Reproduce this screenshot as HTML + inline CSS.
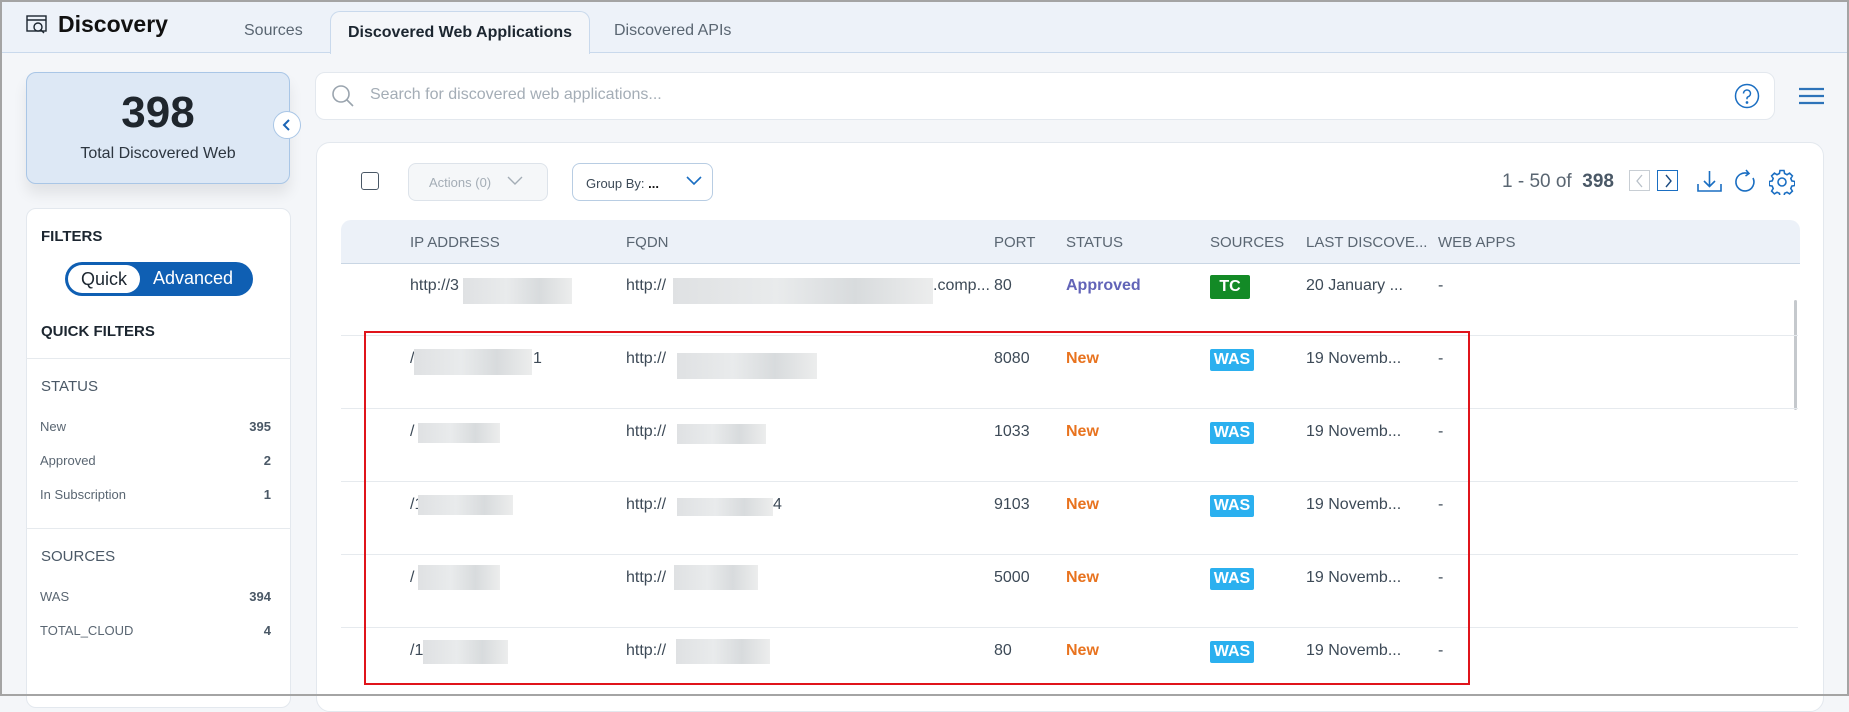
<!DOCTYPE html>
<html><head><meta charset="utf-8"><style>
*{box-sizing:border-box;margin:0;padding:0}
body{width:1849px;height:696px;overflow:hidden;background:#f4f6f9;font-family:"Liberation Sans",sans-serif;color:#3d4a57;position:relative}
.a{position:absolute}
.frame{position:absolute;left:0;top:0;width:1849px;height:696px;border:2px solid #a4a4a4;pointer-events:none;z-index:9}
.top{left:0;top:0;width:1849px;height:53px;background:#edf2f9;border-bottom:1px solid #c9d9ec}
.tab{font-size:16px;color:#5a6672;top:22px}
.activetab{left:330px;top:11px;width:260px;height:43px;background:#f4f6f9;border:1px solid #c9d9ec;border-bottom:none;border-radius:10px 10px 0 0;font-weight:bold;font-size:16px;color:#1c2630;text-align:center;line-height:42px}
.card{left:26px;top:72px;width:264px;height:112px;background:#dde8f5;border:1px solid #a9c6e6;border-radius:10px;box-shadow:0 10px 14px rgba(0,0,0,.08);text-align:center}
.panel{background:#fff;border:1px solid #e3e8ee;border-radius:10px}
.fl{font-size:13px;color:#5a6672;left:40px}
.fn{font-size:13px;color:#4a5866;font-weight:bold;right:1578px;text-align:right}
.hd{font-size:15px;color:#5a6672;top:234px}
.cell{font-size:16px;color:#3d4a57}
.blur{background:linear-gradient(90deg,#dfe1e3,#e9ebec 40%,#d8dbdd 70%,#eceded);height:26px}
.sep{left:341px;width:1457px;height:1px;background:#e6eaee}
.new{color:#e8731f;font-weight:bold;font-size:16px;left:1066px}
.was{left:1210px;width:44px;height:22px;background:#2bb0ef;color:#fff;font-weight:bold;font-size:16px;text-align:center;line-height:22px;border-radius:2px}
</style></head><body>
<div class="a top"></div>
<svg class="a" style="left:26px;top:15px" width="22" height="20" viewBox="0 0 22 20" fill="none" stroke="#1c2630" stroke-width="1.4"><rect x="1" y="1" width="19" height="15"/><line x1="1" y1="5" x2="20" y2="5"/><circle cx="12" cy="12" r="4" fill="#edf2f9"/><line x1="15" y1="15" x2="18" y2="18"/></svg>
<div class="a" style="left:58px;top:11px;font-size:23px;font-weight:bold;color:#111">Discovery</div>
<div class="a tab" style="left:244px">Sources</div>
<div class="a activetab">Discovered Web Applications</div>
<div class="a tab" style="left:614px">Discovered APIs</div>

<div class="a card"><div style="font-size:44px;font-weight:bold;color:#1f262d;margin-top:16px;line-height:48px">398</div><div style="font-size:16px;color:#2d3640;margin-top:8px">Total Discovered Web</div></div>
<div class="a" style="left:273px;top:111px;width:28px;height:28px;border-radius:50%;background:#fff;border:1px solid #a9c6e6"></div>
<svg class="a" style="left:281px;top:118px" width="12" height="14"><path d="M8 2 L3 7 L8 12" fill="none" stroke="#1a64b5" stroke-width="2"/></svg>

<div class="a panel" style="left:26px;top:208px;width:265px;height:500px"></div>
<div class="a" style="left:41px;top:228px;font-size:15px;font-weight:bold;color:#1c2630">FILTERS</div>
<div class="a" style="left:65px;top:262px;width:188px;height:34px;border-radius:17px;background:#0f5fb3"></div>
<div class="a" style="left:68px;top:265px;width:72px;height:28px;border-radius:14px;background:#fff;text-align:center;font-size:18px;line-height:28px;color:#1c2630">Quick</div>
<div class="a" style="left:153px;top:268px;font-size:18px;color:#fff">Advanced</div>
<div class="a" style="left:41px;top:323px;font-size:15px;font-weight:bold;color:#1c2630">QUICK FILTERS</div>
<div class="a" style="left:26px;top:358px;width:265px;height:1px;background:#e6eaee"></div>
<div class="a" style="left:41px;top:378px;font-size:15px;color:#4a5866">STATUS</div>
<div class="a fl" style="top:419px">New</div><div class="a fn" style="top:419px">395</div>
<div class="a fl" style="top:453px">Approved</div><div class="a fn" style="top:453px">2</div>
<div class="a fl" style="top:487px">In Subscription</div><div class="a fn" style="top:487px">1</div>
<div class="a" style="left:26px;top:528px;width:265px;height:1px;background:#e6eaee"></div>
<div class="a" style="left:41px;top:548px;font-size:15px;color:#4a5866">SOURCES</div>
<div class="a fl" style="top:589px">WAS</div><div class="a fn" style="top:589px">394</div>
<div class="a fl" style="top:623px">TOTAL_CLOUD</div><div class="a fn" style="top:623px">4</div>

<div class="a panel" style="left:315px;top:72px;width:1460px;height:48px"></div>
<svg class="a" style="left:330px;top:83px" width="26" height="26" fill="none" stroke="#9aa4ae" stroke-width="1.6"><circle cx="11" cy="11" r="8"/><line x1="17" y1="17" x2="23" y2="23"/></svg>
<div class="a" style="left:370px;top:86px;font-size:16px;color:#a4adb6">Search for discovered web applications...</div>
<svg class="a" style="left:1734px;top:83px" width="26" height="26" fill="none" stroke="#1a6ec2" stroke-width="1.5"><circle cx="13" cy="13" r="11.5"/><path d="M9.5 10.5a3.5 3.5 0 1 1 4.5 3.3c-.7.3-1 .8-1 1.5v1"/><circle cx="13" cy="19.5" r=".6" fill="#1a6ec2"/></svg>
<svg class="a" style="left:1799px;top:86px" width="25" height="20" stroke="#2d73b9" stroke-width="2.2"><line x1="0" y1="3" x2="25" y2="3"/><line x1="0" y1="10" x2="25" y2="10"/><line x1="0" y1="17" x2="25" y2="17"/></svg>

<div class="a panel" style="left:316px;top:142px;width:1508px;height:570px;border-radius:14px"></div>
<div class="a" style="left:361px;top:172px;width:18px;height:18px;border:1.5px solid #4a5866;border-radius:3px"></div>
<div class="a" style="left:408px;top:163px;width:140px;height:38px;border:1px solid #dde3ea;border-radius:8px;background:#f5f7f9;font-size:13px;color:#a4adb6;padding:11px 0 0 20px">Actions (0)</div>
<svg class="a" style="left:507px;top:176px" width="16" height="10"><path d="M1 1 L8 8 L15 1" fill="none" stroke="#a4adb6" stroke-width="1.4"/></svg>
<div class="a" style="left:572px;top:163px;width:141px;height:38px;border:1px solid #b8cde3;border-radius:8px;background:#fff;font-size:13px;color:#3d4a57;padding:12px 0 0 13px">Group By: <b style="color:#111">...</b></div>
<svg class="a" style="left:686px;top:176px" width="16" height="10"><path d="M1 1 L8 8 L15 1" fill="none" stroke="#1a6ec2" stroke-width="1.6"/></svg>
<div class="a" style="left:1502px;top:171px;font-size:19px;color:#5a6672">1 - 50 of <b style="color:#4a5866">&nbsp;398</b></div>
<div class="a" style="left:1629px;top:170px;width:21px;height:21px;border:1px solid #c8ced4"></div>
<svg class="a" style="left:1634px;top:174px" width="12" height="14"><path d="M8 1 L3 7 L8 13" fill="none" stroke="#b8c0c8" stroke-width="1.3"/></svg>
<div class="a" style="left:1657px;top:170px;width:21px;height:21px;border:1.5px solid #1a6ec2"></div>
<svg class="a" style="left:1662px;top:174px" width="12" height="14"><path d="M4 1 L9 7 L4 13" fill="none" stroke="#1a4a80" stroke-width="1.4"/></svg>
<svg class="a" style="left:1697px;top:170px" width="26" height="24" fill="none" stroke="#1a6ec2" stroke-width="1.6"><path d="M1 14v7h23v-7"/><path d="M12.5 1v15M7 11l5.5 5.5L18 11"/></svg>
<svg class="a" style="left:1733px;top:169px" width="24" height="26" fill="none" stroke="#1a6ec2" stroke-width="1.6"><path d="M15 4.5A9 9 0 1 0 20 9"/><path d="M13 1l3 3.5-3.5 2.5"/></svg>
<svg class="a" style="left:1769px;top:169px" width="26" height="26" fill="none" stroke="#1a6ec2" stroke-width="1.6"><path d="M11 1.5h4l.6 3 2.4 1.2 2.6-1.6 2.8 2.8-1.6 2.6 1 2.4 3 .6v4l-3 .6-1 2.4 1.6 2.6-2.8 2.8-2.6-1.6-2.4 1-.6 3h-4l-.6-3-2.4-1-2.6 1.6-2.8-2.8 1.6-2.6-1-2.4-3-.6v-4l3-.6 1-2.4-1.6-2.6 2.8-2.8 2.6 1.6 2.4-1.2z"/><circle cx="13" cy="13" r="4"/></svg>

<div class="a" style="left:341px;top:220px;width:1459px;height:44px;background:#ecf1f8;border-radius:10px 10px 0 0;border-bottom:1px solid #c9d6e4"></div>
<div class="a hd" style="left:410px">IP ADDRESS</div>
<div class="a hd" style="left:626px">FQDN</div>
<div class="a hd" style="left:994px">PORT</div>
<div class="a hd" style="left:1066px">STATUS</div>
<div class="a hd" style="left:1210px">SOURCES</div>
<div class="a hd" style="left:1306px">LAST DISCOVE...</div>
<div class="a hd" style="left:1438px">WEB APPS</div>

<div class="a" style="left:1794px;top:300px;width:3px;height:110px;background:#c5c9cd;border-radius:2px"></div>

<!-- row 1 -->
<div class="a cell" style="left:410px;top:277px">http://3</div><div class="a blur" style="left:463px;top:278px;width:109px"></div>
<div class="a cell" style="left:626px;top:277px">http://</div><div class="a blur" style="left:673px;top:278px;width:260px"></div><div class="a cell" style="left:933px;top:277px">.comp...</div>
<div class="a cell" style="left:994px;top:277px">80</div>
<div class="a" style="left:1066px;top:277px;font-size:16px;font-weight:bold;color:#6264b8">Approved</div>
<div class="a" style="left:1210px;top:275px;width:40px;height:24px;background:#138a26;color:#fff;font-weight:bold;font-size:16px;text-align:center;line-height:24px;border-radius:2px">TC</div>
<div class="a cell" style="left:1306px;top:277px">20 January ...</div>
<div class="a cell" style="left:1438px;top:277px">-</div>
<div class="a sep" style="top:335px"></div>
<!-- row 2 -->
<div class="a cell" style="left:410px;top:350px">/</div><div class="a blur" style="left:414px;top:349px;width:118px"></div><div class="a cell" style="left:533px;top:350px">1</div>
<div class="a cell" style="left:626px;top:350px">http://</div><div class="a blur" style="left:677px;top:353px;width:140px"></div>
<div class="a cell" style="left:994px;top:350px">8080</div><div class="a new" style="top:350px">New</div><div class="a was" style="top:349px">WAS</div>
<div class="a cell" style="left:1306px;top:350px">19 Novemb...</div><div class="a cell" style="left:1438px;top:350px">-</div>
<div class="a sep" style="top:408px"></div>
<!-- row 3 -->
<div class="a cell" style="left:410px;top:423px">/</div><div class="a blur" style="left:418px;top:423px;width:82px;height:20px"></div>
<div class="a cell" style="left:626px;top:423px">http://</div><div class="a blur" style="left:677px;top:424px;width:89px;height:20px"></div>
<div class="a cell" style="left:994px;top:423px">1033</div><div class="a new" style="top:423px">New</div><div class="a was" style="top:422px">WAS</div>
<div class="a cell" style="left:1306px;top:423px">19 Novemb...</div><div class="a cell" style="left:1438px;top:423px">-</div>
<div class="a sep" style="top:481px"></div>
<!-- row 4 -->
<div class="a cell" style="left:410px;top:496px">/1</div><div class="a blur" style="left:418px;top:495px;width:95px;height:20px"></div>
<div class="a cell" style="left:626px;top:496px">http://</div><div class="a blur" style="left:677px;top:498px;width:96px;height:18px"></div><div class="a cell" style="left:773px;top:496px">4</div>
<div class="a cell" style="left:994px;top:496px">9103</div><div class="a new" style="top:496px">New</div><div class="a was" style="top:495px">WAS</div>
<div class="a cell" style="left:1306px;top:496px">19 Novemb...</div><div class="a cell" style="left:1438px;top:496px">-</div>
<div class="a sep" style="top:554px"></div>
<!-- row 5 -->
<div class="a cell" style="left:410px;top:569px">/</div><div class="a blur" style="left:418px;top:565px;width:82px;height:25px"></div>
<div class="a cell" style="left:626px;top:569px">http://</div><div class="a blur" style="left:674px;top:565px;width:84px;height:25px"></div>
<div class="a cell" style="left:994px;top:569px">5000</div><div class="a new" style="top:569px">New</div><div class="a was" style="top:568px">WAS</div>
<div class="a cell" style="left:1306px;top:569px">19 Novemb...</div><div class="a cell" style="left:1438px;top:569px">-</div>
<div class="a sep" style="top:627px"></div>
<!-- row 6 -->
<div class="a cell" style="left:410px;top:642px">/1</div><div class="a blur" style="left:423px;top:640px;width:85px;height:24px"></div>
<div class="a cell" style="left:626px;top:642px">http://</div><div class="a blur" style="left:676px;top:639px;width:94px;height:25px"></div>
<div class="a cell" style="left:994px;top:642px">80</div><div class="a new" style="top:642px">New</div><div class="a was" style="top:641px">WAS</div>
<div class="a cell" style="left:1306px;top:642px">19 Novemb...</div><div class="a cell" style="left:1438px;top:642px">-</div>

<div class="a" style="left:364px;top:331px;width:1106px;height:354px;border:2px solid #e0141b"></div>
<div class="frame"></div>
</body></html>
